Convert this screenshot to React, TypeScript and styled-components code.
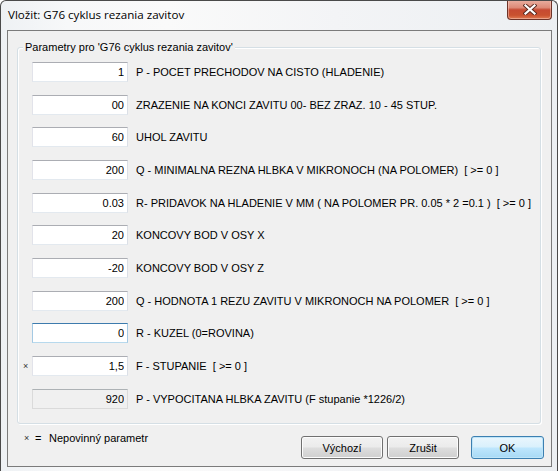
import React from 'react';
import styled, { createGlobalStyle } from 'styled-components';

const Global = createGlobalStyle`
  html, body { margin: 0; padding: 0; background: #ffffff; }
  body { font-family: "Liberation Sans", Arial, sans-serif; }
`;

const Window = styled.div`
  width: 558px;
  height: 471px;
  box-sizing: border-box;
  display: flex;
  flex-direction: column;
  border: 1px solid #4a4a4a;
  border-bottom: none;
  border-radius: 6px 6px 0 0;
  background: linear-gradient(90deg, #eef1f4 0%, #f7f8f9 12%, #fafafa 30%, #f3f4f6 60%, #eceff2 100%);
  overflow: hidden;
`;

const TitleBar = styled.div`
  height: 29px;
  flex: none;
  display: flex;
  align-items: flex-start;
`;

const Title = styled.div`
  margin: 6px 0 0 7px;
  font-family: "Open Sans", "Noto Sans", sans-serif;
  font-size: 11.6px;
  line-height: 16px;
  color: #000;
  white-space: nowrap;
`;

const CloseButton = styled.div`
  margin-left: auto;
  margin-right: 5px;
  margin-top: -1px;
  width: 45px;
  height: 20px;
  box-sizing: border-box;
  border: 1px solid #6d3328;
  border-top: none;
  border-radius: 0 0 4px 4px;
  background: linear-gradient(180deg, #eab0a2 0%, #dd8a77 40%, #c64a32 52%, #c9512f 80%, #e07a52 100%);
  box-shadow: inset 0 0 0 1px rgba(255, 220, 210, 0.45);
  display: flex;
  align-items: center;
  justify-content: center;
`;

const Client = styled.div`
  flex: 1;
  margin: 0 5px 4px 6px;
  border: 1px solid #7b7b7b;
  background: #f0f0f0;
  display: flex;
  flex-direction: column;
  padding: 16px 10px 0 9px;
  min-height: 0;
`;

const GroupBox = styled.div`
  position: relative;
  height: 377px;
  box-sizing: border-box;
  flex: none;
  border: 1px solid #d5dfe5;
  border-radius: 3px;
  box-shadow: inset 1px 1px 0 #ffffff, 1px 1px 0 #ffffff;
  padding: 7.6px 0 0 5px;
`;

const Caption = styled.div`
  position: absolute;
  top: -7px;
  left: 5px;
  padding: 0 2px;
  background: #f0f0f0;
  font-size: 11px;
  line-height: 13px;
  color: #000;
  white-space: nowrap;
`;

const Row = styled.div`
  height: 32.7px;
  display: flex;
  align-items: center;
`;

const Marker = styled.div`
  width: 9px;
  flex: none;
  font-size: 9px;
  color: #333;
  line-height: 10px;
`;

const Field = styled.input<{ $state?: 'normal' | 'focused' | 'disabled' }>`
  width: 96px;
  height: 20px;
  box-sizing: border-box;
  flex: none;
  margin: 0;
  padding: 0 3px 0 2px;
  text-align: right;
  font-family: "Liberation Sans", Arial, sans-serif;
  font-size: 11px;
  color: #000;
  outline: none;
  border-style: solid;
  border-width: 1px;
  background: ${p => (p.$state === 'disabled' ? '#f0f0f0' : '#ffffff')};
  border-color: ${p =>
    p.$state === 'focused'
      ? '#3d7bad #a4c9e3 #b7d9ed #a4c9e3'
      : p.$state === 'disabled'
      ? '#adb2b5 #dadada #dadada #dadada'
      : '#abadb3 #dbdfe6 #e3e9ef #e2e3ea'};
  &:disabled { color: #000; -webkit-text-fill-color: #000; opacity: 1; }
`;

const Label = styled.div`
  margin-left: 8px;
  font-size: 11px;
  color: #000;
  white-space: pre;
`;

const Footer = styled.div`
  flex: 1;
  display: flex;
  align-items: flex-start;
  padding-top: 12px;
  margin-right: -3px;
`;

const Note = styled.div`
  margin: -4px 0 0 7px;
  font-size: 11px;
  line-height: 13px;
  color: #000;
  display: flex;
  align-items: center;
  white-space: nowrap;
`;

const NoteMark = styled.span`
  font-size: 9px;
  color: #333;
  width: 11px;
`;

const NoteEq = styled.span`
  width: 14px;
`;

const Buttons = styled.div`
  margin-left: auto;
  display: flex;
`;

const Button = styled.button<{ $w: number; $gap?: number; $default?: boolean }>`
  width: ${p => p.$w}px;
  height: 23px;
  margin-left: ${p => p.$gap ?? 0}px;
  box-sizing: border-box;
  padding: 0;
  border: 1px solid ${p => (p.$default ? '#3c7fb1' : '#707070')};
  border-radius: 3px;
  background: ${p =>
    p.$default
      ? 'linear-gradient(180deg, #eaf6fd 0%, #d9f0fc 48%, #bee6fd 52%, #a7d9f5 100%)'
      : 'linear-gradient(180deg, #f2f2f2 0%, #ebebeb 48%, #dddddd 52%, #cfcfcf 100%)'};
  box-shadow: inset 0 0 0 1px ${p => (p.$default ? '#bfe5f8' : '#fcfcfc')};
  font-family: "Liberation Sans", Arial, sans-serif;
  font-size: 11px;
  color: #000;
`;

type RowData = { value: string; label: string; state?: 'normal' | 'focused' | 'disabled'; optional?: boolean };

const rows: RowData[] = [
  { value: '1', label: 'P - POCET PRECHODOV NA CISTO (HLADENIE)' },
  { value: '00', label: 'ZRAZENIE NA KONCI ZAVITU 00- BEZ ZRAZ. 10 - 45 STUP.' },
  { value: '60', label: 'UHOL ZAVITU' },
  { value: '200', label: 'Q - MINIMALNA REZNA HLBKA V MIKRONOCH (NA POLOMER)  [ >= 0 ]' },
  { value: '0.03', label: 'R- PRIDAVOK NA HLADENIE V MM ( NA POLOMER PR. 0.05 * 2 =0.1 )  [ >= 0 ]' },
  { value: '20', label: 'KONCOVY BOD V OSY X' },
  { value: '-20', label: 'KONCOVY BOD V OSY Z' },
  { value: '200', label: 'Q - HODNOTA 1 REZU ZAVITU V MIKRONOCH NA POLOMER  [ >= 0 ]' },
  { value: '0', label: 'R - KUZEL (0=ROVINA)', state: 'focused' },
  { value: '1,5', label: 'F - STUPANIE  [ >= 0 ]', optional: true },
  { value: '920', label: 'P - VYPOCITANA HLBKA ZAVITU (F stupanie *1226/2)', state: 'disabled' },
];

const CloseIcon = () => (
  <svg width="14" height="11" viewBox="0 0 14 11">
    <path d="M2.5 1.5 L11.5 9.5 M11.5 1.5 L2.5 9.5" stroke="#5a2a20" strokeWidth="4" strokeLinecap="square" fill="none" />
    <path d="M2.5 1.5 L11.5 9.5 M11.5 1.5 L2.5 9.5" stroke="#ffffff" strokeWidth="2.2" strokeLinecap="square" fill="none" />
  </svg>
);

export default function App() {
  return (
    <>
      <Global />
      <Window>
        <TitleBar>
          <Title>Vložit: G76 cyklus rezania zavitov</Title>
          <CloseButton>
            <CloseIcon />
          </CloseButton>
        </TitleBar>
        <Client>
          <GroupBox>
            <Caption>Parametry pro 'G76 cyklus rezania zavitov'</Caption>
            {rows.map((r, i) => (
              <Row key={i}>
                <Marker>{r.optional ? '×' : ''}</Marker>
                <Field
                  $state={r.state ?? 'normal'}
                  defaultValue={r.value}
                  readOnly
                  disabled={r.state === 'disabled'}
                />
                <Label>{r.label}</Label>
              </Row>
            ))}
          </GroupBox>
          <Footer>
            <Note>
              <NoteMark>×</NoteMark>
              <NoteEq>=</NoteEq>
              <span>Nepovinný parametr</span>
            </Note>
            <Buttons>
              <Button $w={82}>Výchozí</Button>
              <Button $w={72} $gap={4}>Zrušit</Button>
              <Button $w={73} $gap={12} $default>OK</Button>
            </Buttons>
          </Footer>
        </Client>
      </Window>
    </>
  );
}
